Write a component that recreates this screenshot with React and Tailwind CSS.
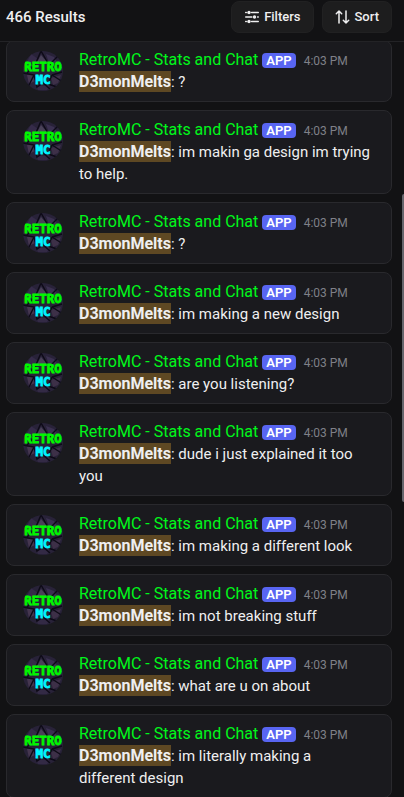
import { useState } from 'react';

const AUTHOR = 'RetroMC - Stats and Chat';
const HIGHLIGHT = 'D3monMelts';

const MESSAGES = [
  { id: 1, text: '?', time: '4:03 PM' },
  { id: 2, text: 'im makin ga design im trying to help.', time: '4:03 PM' },
  { id: 3, text: '?', time: '4:03 PM' },
  { id: 4, text: 'im making a new design', time: '4:03 PM' },
  { id: 5, text: 'are you listening?', time: '4:03 PM' },
  { id: 6, text: 'dude i just explained it too you', time: '4:03 PM' },
  { id: 7, text: 'im making a different look', time: '4:03 PM' },
  { id: 8, text: 'im not breaking stuff', time: '4:03 PM' },
  { id: 9, text: 'what are u on about', time: '4:03 PM' },
  { id: 10, text: 'im literally making a\ndifferent design', time: '4:03 PM' },
];

function Avatar() {
  return (
    <svg viewBox="0 0 40 40" className="mt-0.5 size-10 shrink-0 rounded-full" aria-hidden="true">
      <rect width="40" height="40" fill="#282238" />
      <path d="M8 3 L15 8 L12 15 L3 13 Z" fill="#352b49" />
      <path d="M23 3 L31 6 L36 14 L26 12 Z" fill="#3a3050" />
      <path d="M4 24 L10 23 L12 30 L6 33 Z" fill="#45364f" />
      <path d="M28 27 L38 24 L35 32 L30 34 Z" fill="#3d3048" />
      <path d="M13 33 L20 35 L27 33 L24 39 L15 39 Z" fill="#332a45" />
      <path d="M18 4 L14 11 L24 11 Z" fill="#4a4258" />
      <path
        d="M18 0 L12 14 M18 0 L26 14 M2 11 L12 14 L4 22 M26 14 L39 15 M26 14 L35 5 M0 22 L11 24 L5 36 M11 24 L14 36 L20 32 L27 38 M29 24 L40 31 M29 24 L25 33 L34 36 M29 24 L39 21"
        stroke="#0d0a16"
        strokeWidth="1.4"
        fill="none"
      />
      <g fontFamily="'DejaVu Sans Mono', monospace" fontWeight="700" fontSize="12.5" textAnchor="middle" strokeWidth="0.8">
        <text x="20" y="20.3" fill="#00f900" stroke="#00f900">RETRO</text>
        <text x="20" y="33.3" fill="#00f6ff" stroke="#00f6ff">MC</text>
      </g>
    </svg>
  );
}

function FiltersIcon() {
  return (
    <svg viewBox="0 0 16 16" className="size-4" fill="none" stroke="currentColor" strokeWidth="1.4" strokeLinecap="round" aria-hidden="true">
      <path d="M1.7 3.5h0.6M7.6 3.5h6.7M1.7 8h6.2M13.6 8h0.7M1.7 12.5h0.6M7.6 12.5h6.7" />
      <g fill="currentColor" stroke="none">
        <circle cx="5" cy="3.5" r="1.7" />
        <circle cx="10.5" cy="8" r="1.7" />
        <circle cx="5" cy="12.5" r="1.7" />
      </g>
    </svg>
  );
}

function SortIcon() {
  return (
    <svg viewBox="0 0 16 16" className="size-4" fill="none" stroke="currentColor" strokeWidth="1.5" strokeLinecap="round" strokeLinejoin="round" aria-hidden="true">
      <path d="M4 14V2M1.3 4.7l2.7-2.7 2.7 2.7M11 2v12M8.3 11.3l2.7 2.7 2.7-2.7" />
    </svg>
  );
}

function ToolbarButton({ icon, label, onClick }) {
  return (
    <button
      onClick={onClick}
      className="flex h-8 items-center gap-1 rounded-lg border border-[#212122] bg-[#1d1d1e] px-3 text-[13px] font-medium text-[#efeff0] hover:bg-[#29292b]"
    >
      {icon}
      {label}
    </button>
  );
}

function Message({ message }) {
  return (
    <li className="flex gap-4 rounded-lg border border-[#29292d] bg-[#1a1a1e] px-4 py-2">
      <Avatar />
      <div className="min-w-0 flex-1 text-[#efeff0]">
        <div className="flex h-[22px] items-baseline">
          <span className="text-base leading-[22px] text-[#00f71b]">{AUTHOR}</span>
          <span className="ml-1 rounded bg-[#5865f2] px-1 text-[13px] leading-[15px] font-semibold text-white">APP</span>
          <time className="ml-2 text-xs leading-4 text-[#7f8088]">{message.time}</time>
        </div>
        <p className="text-[15px] leading-[22px] whitespace-pre-line">
          <strong className="inline-block bg-[#5e4823] text-base leading-[21px] font-bold">{HIGHLIGHT}</strong>: {message.text}
        </p>
      </div>
    </li>
  );
}

export default function App() {
  const [newestFirst, setNewestFirst] = useState(true);
  const messages = newestFirst ? MESSAGES : [...MESSAGES].reverse();

  return (
    <div className="relative flex h-screen flex-col overflow-hidden bg-[#121214] font-['Roboto','Liberation_Sans',sans-serif]">
      <header className="flex shrink-0 items-start gap-2 border-b border-[#232326] pt-px pr-3 pb-2 pl-1.5">
        <h1 className="flex-1 text-[15px] leading-8 font-medium text-[#efeff0]">466 Results</h1>
        <ToolbarButton icon={<FiltersIcon />} label="Filters" />
        <ToolbarButton icon={<SortIcon />} label="Sort" onClick={() => setNewestFirst(!newestFirst)} />
      </header>
      <main className="min-h-0 flex-1 overflow-hidden">
        <ul className="-mt-0.5 flex flex-col gap-2 pr-3 pl-1.5">
          {messages.map((message) => (
            <Message key={message.id} message={message} />
          ))}
        </ul>
      </main>
      {/* scrollbar thumb */}
      <div className="absolute top-[194px] right-0 h-[308px] w-0.5 rounded-l-full bg-[#65656c]" />
    </div>
  );
}
